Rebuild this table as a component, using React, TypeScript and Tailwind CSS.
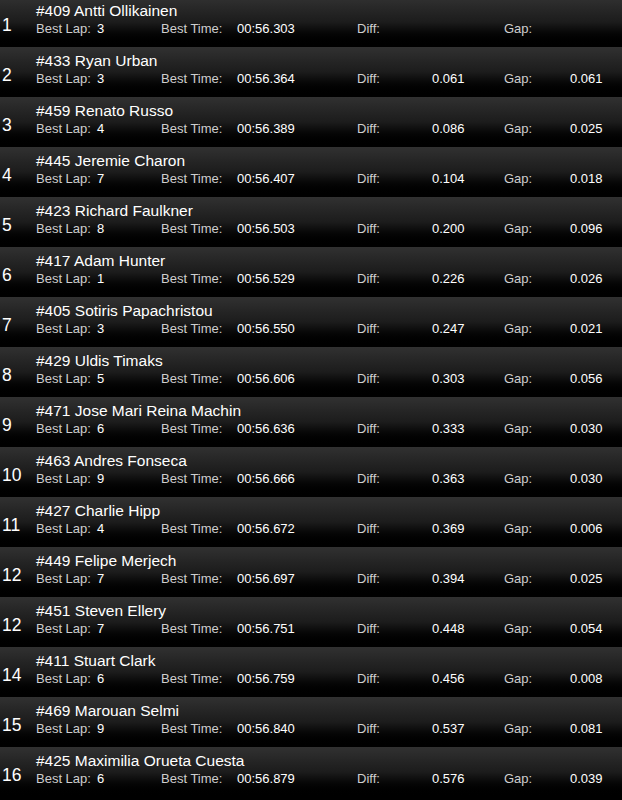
const results = [
  { pos: "1", name: "#409 Antti Ollikainen", lap: "3", time: "00:56.303", diff: "", gap: "" },
  { pos: "2", name: "#433 Ryan Urban", lap: "3", time: "00:56.364", diff: "0.061", gap: "0.061" },
  { pos: "3", name: "#459 Renato Russo", lap: "4", time: "00:56.389", diff: "0.086", gap: "0.025" },
  { pos: "4", name: "#445 Jeremie Charon", lap: "7", time: "00:56.407", diff: "0.104", gap: "0.018" },
  { pos: "5", name: "#423 Richard Faulkner", lap: "8", time: "00:56.503", diff: "0.200", gap: "0.096" },
  { pos: "6", name: "#417 Adam Hunter", lap: "1", time: "00:56.529", diff: "0.226", gap: "0.026" },
  { pos: "7", name: "#405 Sotiris Papachristou", lap: "3", time: "00:56.550", diff: "0.247", gap: "0.021" },
  { pos: "8", name: "#429 Uldis Timaks", lap: "5", time: "00:56.606", diff: "0.303", gap: "0.056" },
  { pos: "9", name: "#471 Jose Mari Reina Machin", lap: "6", time: "00:56.636", diff: "0.333", gap: "0.030" },
  { pos: "10", name: "#463 Andres Fonseca", lap: "9", time: "00:56.666", diff: "0.363", gap: "0.030" },
  { pos: "11", name: "#427 Charlie Hipp", lap: "4", time: "00:56.672", diff: "0.369", gap: "0.006" },
  { pos: "12", name: "#449 Felipe Merjech", lap: "7", time: "00:56.697", diff: "0.394", gap: "0.025" },
  { pos: "12", name: "#451 Steven Ellery", lap: "7", time: "00:56.751", diff: "0.448", gap: "0.054" },
  { pos: "14", name: "#411 Stuart Clark", lap: "6", time: "00:56.759", diff: "0.456", gap: "0.008" },
  { pos: "15", name: "#469 Marouan Selmi", lap: "9", time: "00:56.840", diff: "0.537", gap: "0.081" },
  { pos: "16", name: "#425 Maximilia Orueta Cuesta", lap: "6", time: "00:56.879", diff: "0.576", gap: "0.039" },
];

const App = () => {
  return (
    <main
      className="w-[622px] h-[800px] overflow-hidden bg-black text-white"
      style={{ fontFamily: '"Liberation Sans", Arial, sans-serif' }}
    >
      <div className="-mt-[3px]">
        {results.map((r, i) => (
          <div
            key={i}
            className="flex h-[50px] bg-gradient-to-b from-[#313131] via-[#1c1c1c] to-black"
          >
            <div className="w-[36px] pl-[2px] pt-[18px] text-[17.5px] leading-[20px]">
              {r.pos}
            </div>
            <div className="flex-1 pt-[5px]">
              <div className="text-[15.5px] leading-[18px]">{r.name}</div>
              <div className="mt-[1px] flex text-[13px] leading-[16px]">
                <span className="w-[61px] text-[#cfcfcf]">Best Lap:</span>
                <span className="w-[64px]">{r.lap}</span>
                <span className="w-[76px] text-[#cfcfcf]">Best Time:</span>
                <span className="w-[120px]">{r.time}</span>
                <span className="w-[75px] text-[#cfcfcf]">Diff:</span>
                <span className="w-[72px]">{r.diff}</span>
                <span className="w-[66px] text-[#cfcfcf]">Gap:</span>
                <span>{r.gap}</span>
              </div>
            </div>
          </div>
        ))}
      </div>
    </main>
  );
};

export default App;
